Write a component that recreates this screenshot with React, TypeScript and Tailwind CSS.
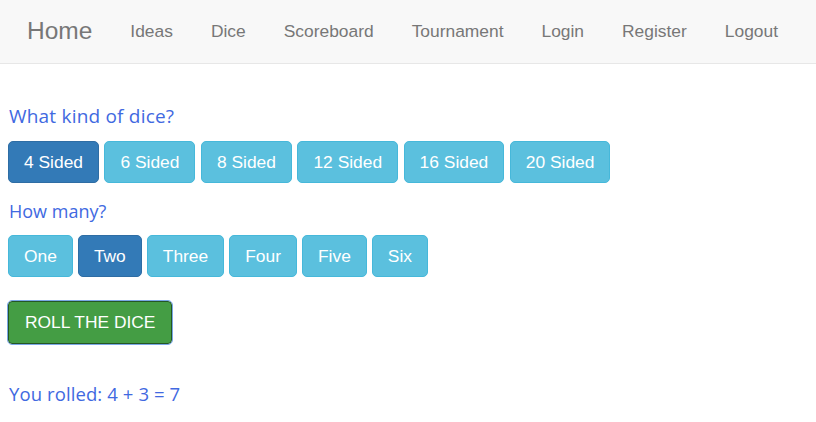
const navLinks = ["Ideas", "Dice", "Scoreboard", "Tournament", "Login", "Register", "Logout"];
const sides = ["4 Sided", "6 Sided", "8 Sided", "12 Sided", "16 Sided", "20 Sided"];
const counts = ["One", "Two", "Three", "Four", "Five", "Six"];

const Choice = ({ label, active }: { label: string; active: boolean }) => (
  <button
    className={
      active
        ? "h-[42px] rounded-[5px] border border-[#2e6da4] bg-[#337ab7] px-[15px] text-[17.4px] text-white"
        : "h-[42px] rounded-[5px] border border-[#46b8da] bg-[#5bc0de] px-[15px] text-[17.4px] text-white"
    }
  >
    {label}
  </button>
);

const App = () => {
  return (
    <div className="min-h-[422px] bg-white font-['Liberation_Sans',Arial,sans-serif]">
      <nav className="flex h-[64px] items-center border-b border-[#e7e7e7] bg-[#f8f8f8] pl-[27px]">
        <span className="mr-[19px] text-[24.5px] text-[#777]">Home</span>
        {navLinks.map((link) => (
          <span key={link} className="px-[19px] text-[17.4px] text-[#777]">
            {link}
          </span>
        ))}
      </nav>

      <div className="px-[8px] pt-[40px] font-['Comic_Sans_MS','Open_Sans',cursive] text-[#4169e1]">
        <p className="pl-[1px] text-[19px] leading-[24px] tracking-[0.2px]">What kind of dice?</p>
        <div className="mt-[13px] flex gap-[5.5px] font-['Liberation_Sans',Arial,sans-serif]">
          {sides.map((s, i) => (
            <Choice key={s} label={s} active={i === 0} />
          ))}
        </div>

        <p className="mt-[16px] pl-[1px] text-[18px] leading-[24px]">How many?</p>
        <div className="mt-[12px] flex gap-[5px] font-['Liberation_Sans',Arial,sans-serif]">
          {counts.map((c, i) => (
            <Choice key={c} label={c} active={i === 1} />
          ))}
        </div>

        <button className="mt-[24px] h-[43px] rounded-[4px] border border-[#255625] bg-[#449d44] px-[16px] font-['Liberation_Sans',Arial,sans-serif] text-[17.4px] text-white outline outline-1 outline-[#7aa7e6]">
          ROLL THE DICE
        </button>

        <p className="mt-[38px] pl-[1px] text-[18.5px] leading-[24px] tracking-[0.1px]">You rolled: 4 + 3 = 7</p>
      </div>
    </div>
  );
};

export default App;
